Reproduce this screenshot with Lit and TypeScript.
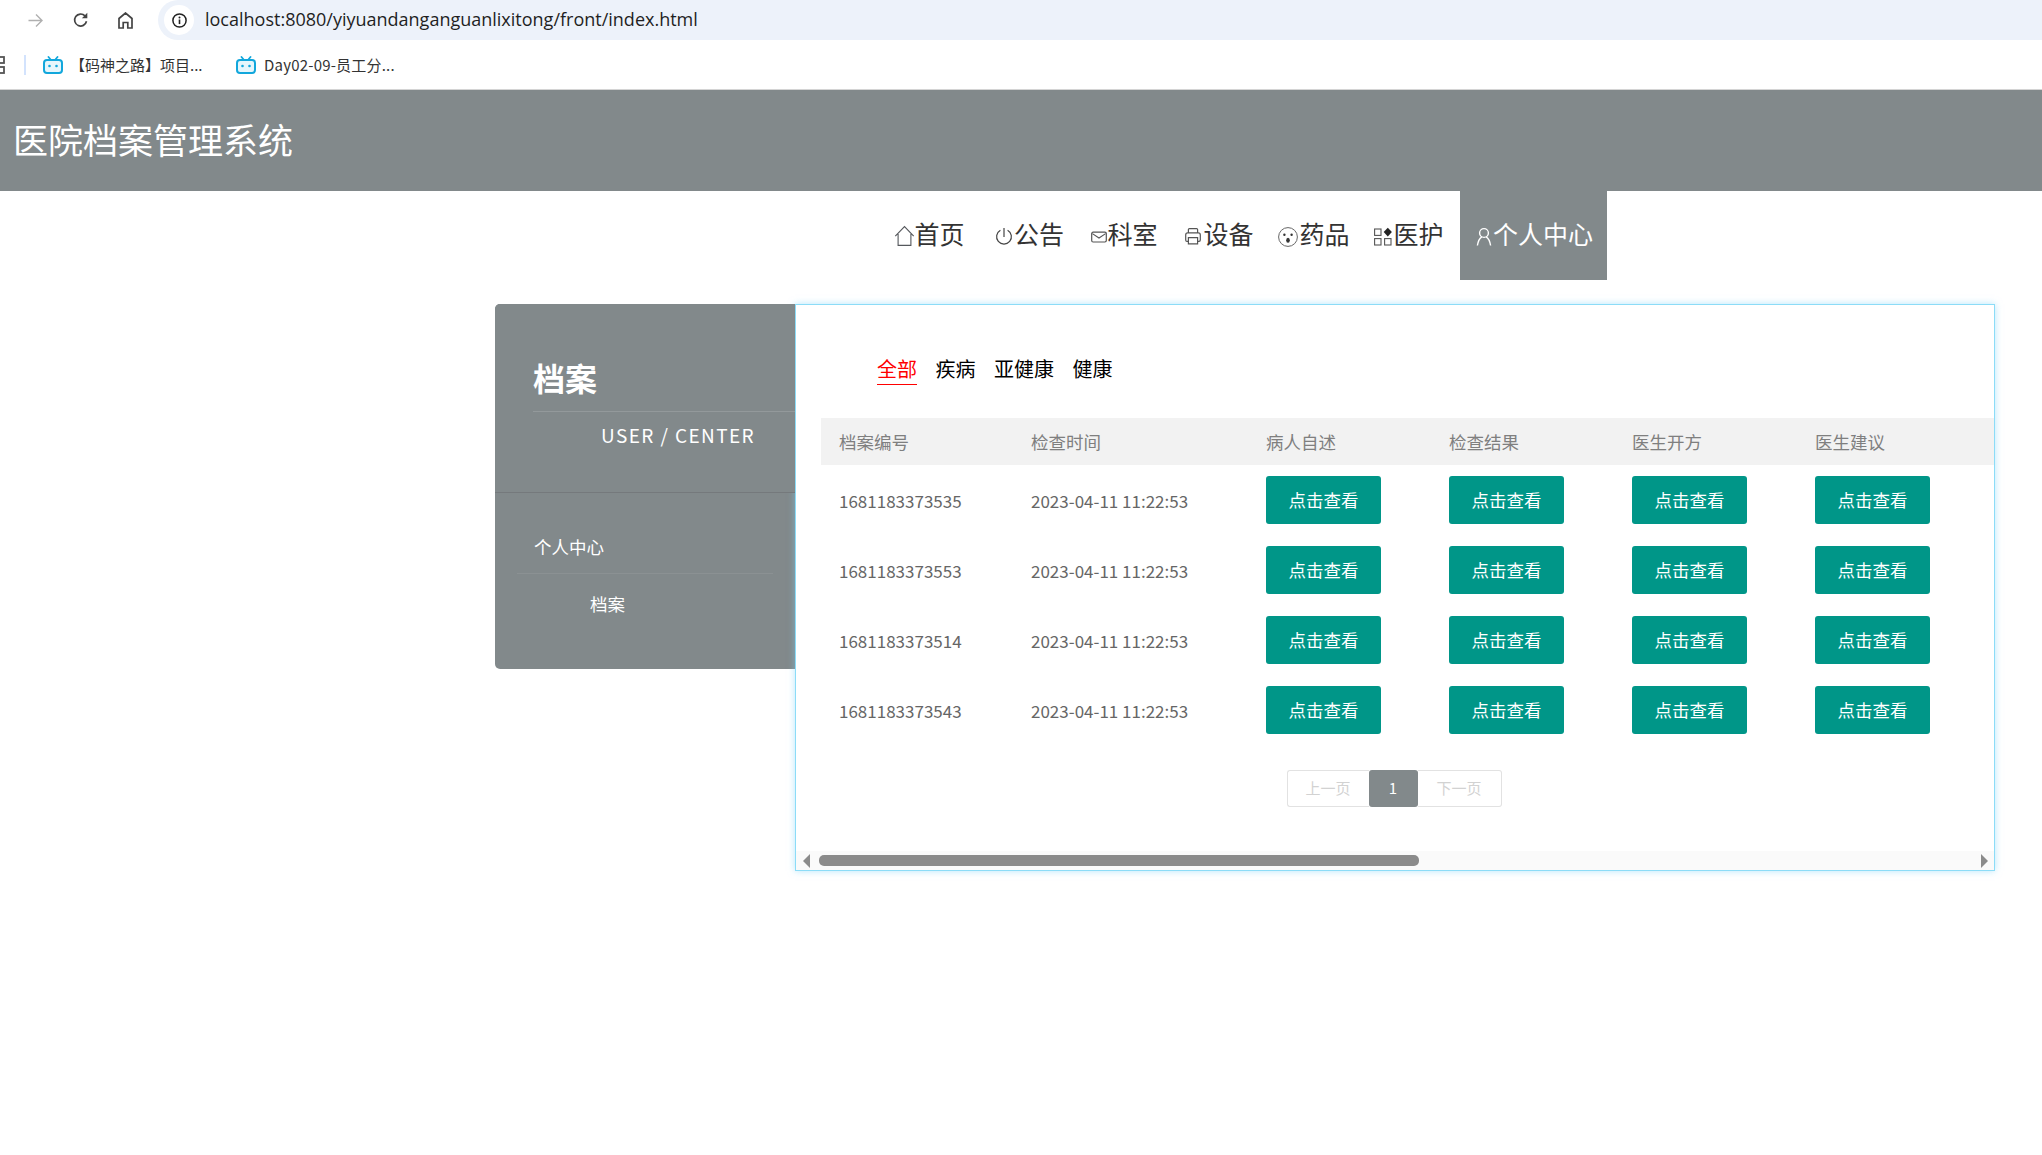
import { LitElement, css, html, svg } from "lit";
import { customElement } from "lit/decorators.js";

const navItems = [
  {
    label: "首页",
    w: 22,
    icon: svg`<path d="M2.3 12.2 11.5 2.6l9.2 9.6M5.1 10v11.4h12.8V10" fill="none" stroke="#55585c" stroke-width="1.1"/>`,
  },
  {
    label: "公告",
    w: 22.5,
    icon: svg`<path d="M8.4 6.2a7.4 7.4 0 1 0 7.2 0M12 4v9" fill="none" stroke="#444" stroke-width="1.2"/>`,
  },
  {
    label: "科室",
    w: 16.5,
    icon: svg`<rect x="0.7" y="8.2" width="14.6" height="9.8" rx="1.4" fill="none" stroke="#555" stroke-width="1.2"/><path d="M1.4 9.6 8 14l6.6-4.4" fill="none" stroke="#555" stroke-width="1.1"/>`,
  },
  {
    label: "设备",
    w: 19,
    icon: svg`<path d="M3.4 9V5.6q0-1 1-1h7.2q1 0 1 1V9M3.4 17.4H2q-1.3 0-1.3-1.3v-5.2q0-2 2-2h10.6q2 0 2 2v5.2q0 1.3-1.3 1.3h-1.4M3.4 13.6h9.2v6.2H3.4z" fill="none" stroke="#555" stroke-width="1.2"/>`,
  },
  {
    label: "药品",
    w: 19,
    icon: svg`<circle cx="7" cy="13" r="9.4" fill="none" stroke="#666" stroke-width="1"/><circle cx="3.4" cy="10.8" r="1.2" fill="#333"/><circle cx="10.6" cy="10.8" r="1.2" fill="#333"/><ellipse cx="7" cy="16.2" rx="1.8" ry="2.5" fill="#333"/>`,
  },
  {
    label: "医护",
    w: 17,
    icon: svg`<g fill="none" stroke="#555" stroke-width="1.1"><rect x="-2.4" y="5" width="6.4" height="6.4"/><rect x="-2.4" y="14.6" width="6.4" height="6.4"/><rect x="7.6" y="14.6" width="6.4" height="6.4"/></g><path d="M10.8 3.8l4.1 4.3-4.1 4.3-4.1-4.3z" fill="#222"/>`,
  },
  {
    label: "个人中心",
    w: 17,
    active: true,
    icon: svg`<circle cx="8" cy="9" r="4.4" fill="none" stroke="#fff" stroke-width="1.4"/><path d="M1.4 21.5q1-6.5 4.4-8.7M14.6 21.5q-1-6.5-4.4-8.7" fill="none" stroke="#fff" stroke-width="1.4"/>`,
  },
];

const filters = ["全部", "疾病", "亚健康", "健康"];
const heads = ["档案编号", "检查时间", "病人自述", "检查结果", "医生开方", "医生建议"];
const records = ["1681183373535", "1681183373553", "1681183373514", "1681183373543"];

const biliIcon = html`<svg class="bili" width="20" height="18" viewBox="0 0 20 18">
  <path d="M5.5 1 8 4M14.5 1 12 4" stroke="#12a7dc" stroke-width="1.8" stroke-linecap="round" fill="none" />
  <rect x="1" y="4" width="18" height="13" rx="3" fill="#e6f6fc" stroke="#12a7dc" stroke-width="2" />
  <circle cx="6.5" cy="10" r="1.3" fill="#12a7dc" />
  <circle cx="13.5" cy="10" r="1.3" fill="#12a7dc" />
</svg>`;

@customElement("app-root")
export class AppRoot extends LitElement {
  static styles = css`
    :host {
      display: block;
      min-height: 1155px;
      overflow: hidden;
      background: #fff;
      font-family: "Noto Sans CJK SC", "Noto Sans", sans-serif;
    }

    .toolbar {
      display: flex;
      align-items: center;
      height: 40px;
      padding-left: 28px;
      gap: 30px;
    }

    .url-bar {
      flex: 1;
      display: flex;
      align-items: center;
      height: 40px;
      margin-left: -5px;
      padding-left: 6px;
      background: #edf2fa;
      border-radius: 20px 0 0 20px;
    }

    .site-info {
      display: flex;
      align-items: center;
      justify-content: center;
      width: 30px;
      height: 30px;
      border-radius: 50%;
      background: #fff;
    }

    .url {
      margin: 0 0 2px 11px;
      font-family: "Open Sans", "Noto Sans", sans-serif;
      font-size: 18px;
      color: #1f1f1f;
    }

    .bookmarks {
      display: flex;
      align-items: center;
      height: 49px;
      border-bottom: 1px solid #d4d4d4;
      font-size: 15px;
      color: #333;
    }

    .bookmarks .sep {
      width: 2px;
      height: 20px;
      margin: 0 17px 0 19px;
      background: #d3e3fd;
    }

    .bookmarks .mark {
      display: flex;
      align-items: center;
      gap: 7px;
      width: 193px;
    }

    .bookmarks .mark + .mark {
      gap: 8px;
      letter-spacing: 0.2px;
    }

    .site-header {
      display: flex;
      align-items: center;
      height: 101px;
      padding: 0 0 4px 13px;
      box-sizing: border-box;
      background: #82898b;
      font-size: 35px;
      color: #fff;
    }

    .nav {
      display: flex;
      height: 89px;
      padding-left: 879px;
      font-size: 25px;
      color: #333;
    }

    .nav-item {
      display: flex;
      align-items: center;
      padding: 0 13.5px;
    }

    .nav-item span {
      margin-bottom: 5px;
    }

    .nav-item svg {
      overflow: visible;
      flex: none;
    }

    .nav-item.active {
      margin-left: 2.5px;
      padding-left: 16.5px;
      background: #82898b;
      color: #fff;
    }

    .content {
      display: flex;
      margin: 24px 47px 0 495px;
    }

    .sidebar {
      flex: none;
      align-self: flex-start;
      width: 300px;
      height: 365px;
      border-radius: 5px 0 0 5px;
      background: #82898b;
      color: #fff;
    }

    .side-head {
      position: relative;
      z-index: 2;
      height: 189px;
      padding-top: 45px;
      box-sizing: border-box;
      border-bottom: 1px solid #75797c;
      border-radius: 5px 0 0 0;
      background: #82898b;
    }

    .side-title {
      height: 62px;
      margin-left: 38px;
      border-bottom: 1px solid #93999b;
      font-size: 32px;
      font-weight: 700;
      line-height: 57px;
    }

    .side-sub {
      padding-right: 40px;
      font-size: 19px;
      letter-spacing: 1.4px;
      line-height: 46px;
      text-align: right;
    }

    .side-menu {
      margin: 0 22px;
      padding-top: 28px;
      font-size: 17.5px;
    }

    .side-menu .group {
      padding-left: 17px;
      border-bottom: 1px solid #8b9193;
      line-height: 52px;
    }

    .side-menu .leaf {
      padding-left: 73px;
      line-height: 60px;
    }

    .panel {
      position: relative;
      z-index: 1;
      flex: 1;
      display: flex;
      flex-direction: column;
      min-width: 0;
      height: 567px;
      box-sizing: border-box;
      border: 1px solid #8cdcf7;
      box-shadow: 0 0 7px rgba(120, 210, 250, 0.55);
      background: #fff;
    }

    .panel-body {
      flex: 1;
      overflow: hidden;
    }

    .filters {
      display: flex;
      gap: 18.5px;
      height: 113px;
      padding: 49px 0 0 81px;
      box-sizing: border-box;
      font-size: 20px;
      color: #000;
    }

    .filters span {
      height: 30px;
      line-height: 30px;
    }

    .filters .on {
      border-bottom: 1.5px solid #f00;
      color: #f00;
    }

    table {
      width: 1159px;
      margin-left: 25px;
      border-collapse: collapse;
      table-layout: fixed;
      font-size: 17.5px;
      color: #666;
    }

    col.c-id {
      width: 192px;
    }

    col.c-time {
      width: 235px;
    }

    col.c-view {
      width: 183px;
    }

    th {
      height: 47px;
      padding: 0 0 0 18px;
      background: #f2f2f2;
      font-weight: 400;
      text-align: left;
      color: #7f7f7f;
    }

    /* grey band runs on to the panel edge */
    thead tr {
      box-shadow: 20px 0 0 #f2f2f2;
    }

    td {
      height: 70px;
      padding: 0 0 0 18px;
    }

    td.num {
      font-size: 17px;
    }

    .view {
      display: block;
      width: 115px;
      height: 48px;
      padding: 0 0 2px;
      border: 0;
      border-radius: 3px;
      background: #009688;
      font: inherit;
      color: #fff;
    }

    .pager {
      display: flex;
      justify-content: center;
      margin-top: 25px;
      padding-right: 2px;
      font-size: 15px;
      color: #d2d2d2;
    }

    .pager span {
      display: flex;
      align-items: center;
      justify-content: center;
      height: 37px;
      padding-bottom: 2px;
      box-sizing: border-box;
      border: 1px solid #e2e2e2;
    }

    .pager .prev {
      width: 82px;
      border-right: 0;
      border-radius: 3px 0 0 3px;
    }

    .pager .next {
      width: 84px;
      border-left: 0;
      border-radius: 0 3px 3px 0;
    }

    .pager .current {
      width: 49px;
      border: 0;
      border-radius: 3px;
      background: #82898b;
      color: #fff;
    }

    .scrollbar {
      flex: none;
      display: flex;
      align-items: center;
      height: 19px;
      padding: 0 6px 0 7px;
      background: #fafafa;
    }

    .scrollbar .track {
      flex: 1;
      padding: 0 9px;
    }

    .scrollbar .thumb {
      width: 600px;
      height: 11px;
      border-radius: 5px;
      background: #8b8b8b;
    }
  `;

  render() {
    return html`
      <div class="toolbar">
        <svg width="15" height="15" viewBox="0 0 15 15">
          <path d="M0.5 7.5h13M8 1.5l6 6-6 6" fill="none" stroke="#b0b0b0" stroke-width="1.4" />
        </svg>
        <svg width="15" height="16" viewBox="0 0 15 16">
          <path d="M13.5 9.3a6 6 0 1 1-1.5-5.4l1.5 1.6" fill="none" stroke="#444" stroke-width="1.7" />
          <path d="M14.3 0.8v5.4H8.9z" fill="#444" />
        </svg>
        <svg width="15" height="17" viewBox="0 0 15 17">
          <path d="M1 16V6.5L7.5 1 14 6.5V16H9.8v-5.5H5.2V16z" fill="none" stroke="#444" stroke-width="1.7" />
        </svg>
        <div class="url-bar">
          <div class="site-info">
            <svg width="15" height="15" viewBox="0 0 15 15">
              <circle cx="7.5" cy="7.5" r="6.6" fill="none" stroke="#222" stroke-width="1.5" />
              <path d="M7.5 6.5v4.6" stroke="#222" stroke-width="1.6" />
              <circle cx="7.5" cy="4.4" r="1" fill="#222" />
            </svg>
          </div>
          <span class="url">localhost:8080/yiyuandanganguanlixitong/front/index.html</span>
        </div>
      </div>
      <div class="bookmarks">
        <svg width="5" height="18" viewBox="8 0 5 18">
          <g fill="none" stroke="#555" stroke-width="1.8">
            <rect x="1" y="1" width="11" height="6" />
            <rect x="1" y="11" width="11" height="6" />
          </g>
        </svg>
        <div class="sep"></div>
        <div class="mark">${biliIcon}<span>【码神之路】项目...</span></div>
        <div class="mark">${biliIcon}<span>Day02-09-员工分...</span></div>
      </div>
      <header class="site-header">医院档案管理系统</header>
      <nav class="nav">
        ${navItems.map(
          (item) => html`
            <div class="nav-item ${item.active ? "active" : ""}">
              <svg width=${item.w} height="24" viewBox="0 0 ${item.w} 24">${item.icon}</svg>
              <span>${item.label}</span>
            </div>
          `
        )}
      </nav>
      <div class="content">
        <aside class="sidebar">
          <div class="side-head">
            <div class="side-title">档案</div>
            <div class="side-sub">USER / CENTER</div>
          </div>
          <div class="side-menu">
            <div class="group">个人中心</div>
            <div class="leaf">档案</div>
          </div>
        </aside>
        <section class="panel">
          <div class="panel-body">
            <div class="filters">
              ${filters.map((f, i) => html`<span class=${i === 0 ? "on" : ""}>${f}</span>`)}
            </div>
            <table>
              <colgroup>
                <col class="c-id" />
                <col class="c-time" />
                <col class="c-view" />
                <col class="c-view" />
                <col class="c-view" />
                <col class="c-view" />
              </colgroup>
              <thead>
                <tr>
                  ${heads.map((h) => html`<th>${h}</th>`)}
                </tr>
              </thead>
              <tbody>
                ${records.map(
                  (id) => html`
                    <tr>
                      <td class="num">${id}</td>
                      <td class="num">2023-04-11 11:22:53</td>
                      ${[0, 1, 2, 3].map(() => html`<td><button class="view">点击查看</button></td>`)}
                    </tr>
                  `
                )}
              </tbody>
            </table>
            <div class="pager">
              <span class="prev">上一页</span>
              <span class="current">1</span>
              <span class="next">下一页</span>
            </div>
          </div>
          <div class="scrollbar">
            <svg width="7" height="14" viewBox="0 0 7 14"><path d="M7 0v14L0 7z" fill="#8b8b8b" /></svg>
            <div class="track"><div class="thumb"></div></div>
            <svg width="7" height="14" viewBox="0 0 7 14"><path d="M0 0v14l7-7z" fill="#8b8b8b" /></svg>
          </div>
        </section>
      </div>
    `;
  }
}
